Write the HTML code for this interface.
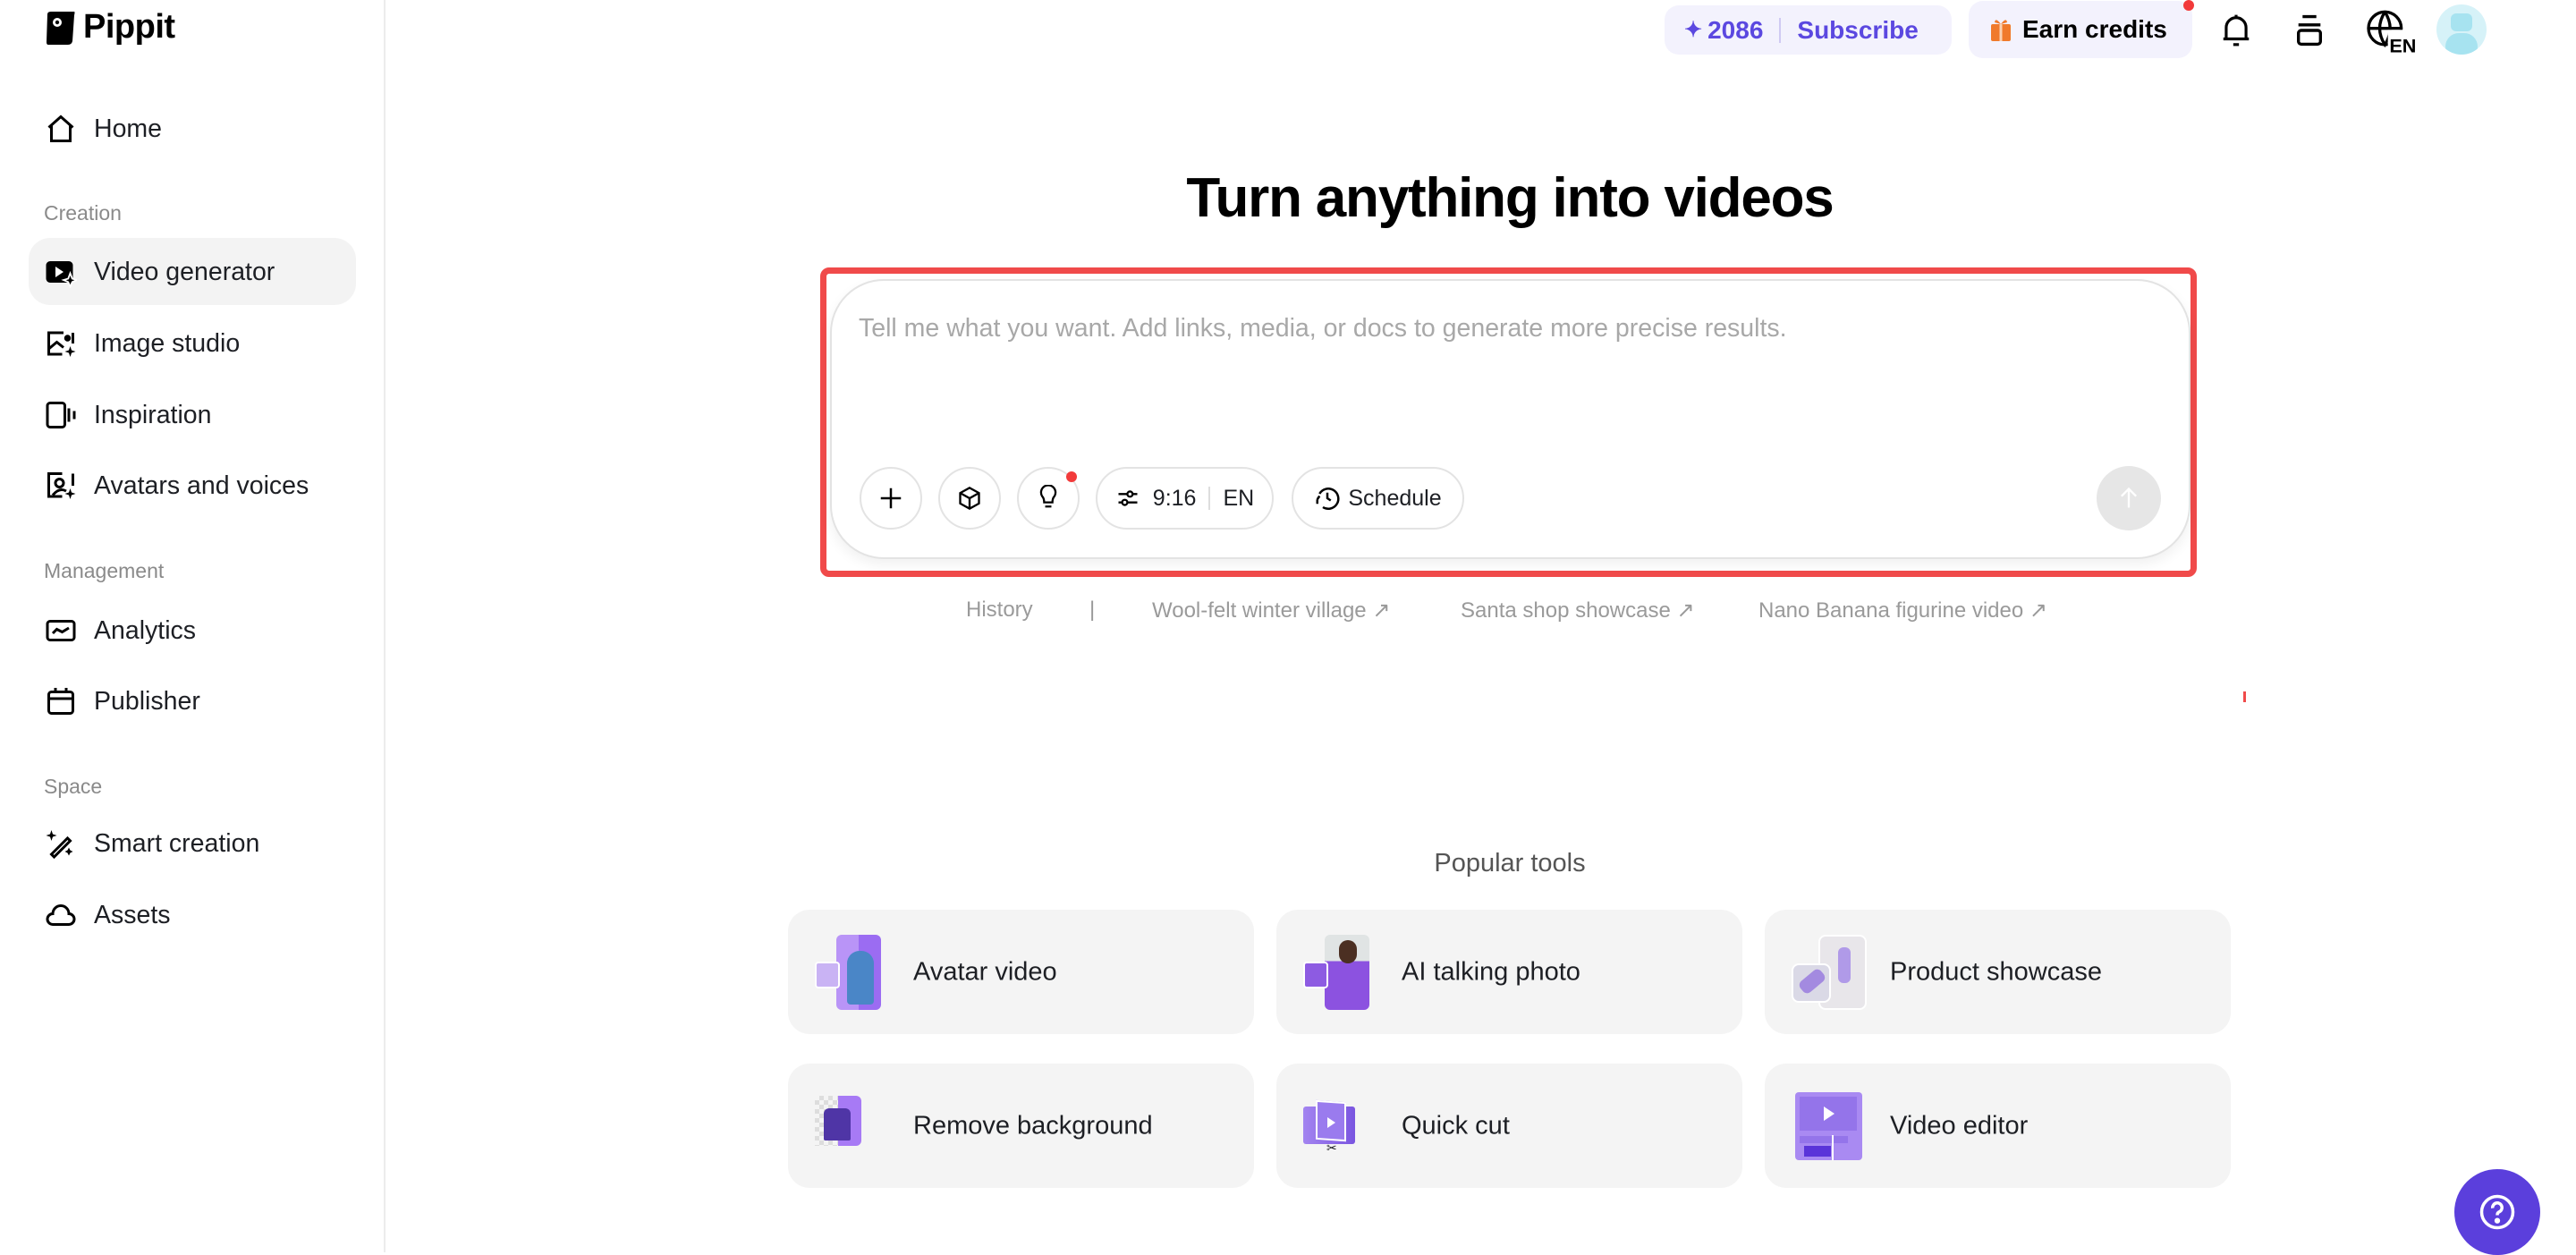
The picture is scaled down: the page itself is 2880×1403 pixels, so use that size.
<!DOCTYPE html>
<html><head><meta charset="utf-8"><style>
*{margin:0;padding:0;box-sizing:border-box}
body{width:2880px;height:1400px;background:#fff;font-family:"Liberation Sans",sans-serif;color:#1d1f24;position:relative;overflow:hidden}
.a{position:absolute}
.side{left:0;top:0;width:431px;height:1400px;border-right:2px solid #ececec}
.nav{position:absolute;left:50px;height:40px;display:flex;align-items:center;font-size:28.5px;color:#1d1f24}
.nav svg{width:36px;height:36px;margin-right:19px}
.lab{position:absolute;left:49px;font-size:23px;color:#8a8a8a}
.circ{position:absolute;top:522px;width:70px;height:70px;border:2px solid #e3e3e3;border-radius:35px;display:flex;align-items:center;justify-content:center;background:#fff}
.pill{position:absolute;top:522px;height:70px;border:2px solid #e3e3e3;border-radius:35px;display:flex;align-items:center;justify-content:center;font-size:25px;background:#fff}
.sug{position:absolute;top:668px;font-size:24px;color:#9a9a9a}
.card{position:absolute;width:521px;height:139px;background:#f4f4f4;border-radius:24px}
.card .t{position:absolute;left:140px;top:50%;transform:translateY(-50%);font-size:29px;color:#1d1f24}
.card .ic{position:absolute;left:30px;top:28px;width:80px;height:84px}
</style></head><body>
<div class="a side"></div>
<svg class="a" style="left:51px;top:12px" width="34" height="40" viewBox="0 0 34 40"><path d="M2 4 Q2 1 6 1 L32 1 Q33 1 32 5 L30 34 Q29 38 25 38 L3 38 Q1 38 1 35Z" fill="#000"/><circle cx="13" cy="13" r="5" fill="#fff"/><circle cx="13" cy="13" r="2.2" fill="#000"/></svg>
<div class="a" style="left:93px;top:9px;font-size:38px;font-weight:bold;letter-spacing:-0.5px;color:#000">Pippit</div>

<div class="a" style="left:32px;top:266px;width:366px;height:75px;background:#f3f3f3;border-radius:24px"></div>
<div class="nav" style="top:124px"><svg viewBox="0 0 24 24" fill="none" stroke="#000" stroke-width="2"><path d="M3 11 L12 3 L21 11 M5 9 V21 H19 V9"/></svg>Home</div>
<div class="lab" style="top:225px">Creation</div>
<div class="nav" style="top:284px"><svg viewBox="0 0 24 24"><rect x="1" y="4" width="20" height="16" rx="3" fill="#000"/><path d="M8 8 L14 12 L8 16Z" fill="#fff"/><path d="M19 13 L20.5 17 L24 18 L20.5 19.5 L19 23 L17.5 19.5 L14 18 L17.5 17Z" fill="#000" stroke="#fff" stroke-width="1.2"/></svg>Video generator</div>
<div class="nav" style="top:364px"><svg viewBox="0 0 24 24" fill="none" stroke="#000" stroke-width="2"><path d="M14 4 H3 V20 H13 M21 4 V12"/><path d="M3 16 L9 11 L14 15"/><circle cx="17" cy="8" r="1.5" fill="#000"/><path d="M19 14 L20 17 L23 18 L20 19 L19 22 L18 19 L15 18 L18 17Z" fill="#000" stroke="none"/></svg>Image studio</div>
<div class="nav" style="top:444px"><svg viewBox="0 0 24 24" fill="none" stroke="#000" stroke-width="2"><rect x="2" y="3" width="13" height="18" rx="2"/><path d="M18 7 V17 M22 9 V15"/></svg>Inspiration</div>
<div class="nav" style="top:523px"><svg viewBox="0 0 24 24" fill="none" stroke="#000" stroke-width="2"><path d="M13 3 H3 V20 H13 M21 3 V12"/><circle cx="11" cy="10" r="3"/><path d="M6 19 Q11 13 16 16"/><path d="M19 14 L20 17 L23 18 L20 19 L19 22 L18 19 L15 18 L18 17Z" fill="#000" stroke="none"/></svg>Avatars and voices</div>
<div class="lab" style="top:625px">Management</div>
<div class="nav" style="top:685px"><svg viewBox="0 0 24 24" fill="none" stroke="#000" stroke-width="2"><rect x="2" y="5" width="20" height="14" rx="2"/><path d="M6 14 L9 11 L13 13 L18 10"/></svg>Analytics</div>
<div class="nav" style="top:764px"><svg viewBox="0 0 24 24" fill="none" stroke="#000" stroke-width="2"><rect x="3" y="5" width="18" height="16" rx="2"/><path d="M3 10 H21 M8 2 V6 M16 2 V6"/></svg>Publisher</div>
<div class="lab" style="top:866px">Space</div>
<div class="nav" style="top:923px"><svg viewBox="0 0 24 24" fill="none" stroke="#000" stroke-width="2"><path d="M5 20 L17 8 L19 10 L7 22Z"/><path d="M5 2 L6 5 L9 6 L6 7 L5 10 L4 7 L1 6 L4 5Z M18 15 L19 17 L21 18 L19 19 L18 21 L17 19 L15 18 L17 17Z" fill="#000" stroke="none"/></svg>Smart creation</div>
<div class="nav" style="top:1003px"><svg viewBox="0 0 24 24" fill="none" stroke="#000" stroke-width="2"><path d="M6 19 H18 A4 4 0 0 0 18 11 A6 6 0 0 0 6 11 A4 4 0 0 0 6 19Z"/></svg>Assets</div>

<div class="a" style="left:1861px;top:6px;width:321px;height:55px;background:#f3f2fd;border-radius:16px;display:flex;align-items:center;padding-left:22px;font-size:28px;font-weight:bold;color:#5b48e0">
<span style="font-size:24px;margin-right:6px">✦</span>2086<span style="width:2px;height:28px;background:#cfcaf3;margin:0 18px"></span>Subscribe</div>
<div class="a" style="left:2201px;top:1px;width:250px;height:64px;background:#f3f2fd;border-radius:16px;display:flex;align-items:center;padding-left:24px;font-size:28px;font-weight:bold;color:#000">
<svg width="24" height="28" viewBox="0 0 24 28" style="margin-right:12px"><rect x="1" y="8" width="22" height="19" rx="2" fill="#f07a2b"/><rect x="10.5" y="8" width="3" height="19" fill="#fbd2b2"/><path d="M12 8 Q6 0 5 6Z M12 8 Q18 0 19 6Z" fill="#f07a2b"/></svg>Earn credits</div>
<div class="a" style="left:2441px;top:0;width:12px;height:12px;border-radius:6px;background:#f23a3a"></div>
<svg class="a" style="left:2481px;top:13px" width="38" height="42" viewBox="0 0 24 26" fill="none" stroke="#000" stroke-width="2"><path d="M5 19 V11 A7 7 0 0 1 19 11 V19 M3 19 H21 M12 2 V4"/><path d="M10 23 H14"/></svg>
<svg class="a" style="left:2563px;top:14px" width="38" height="40" viewBox="0 0 24 26" fill="none" stroke="#000" stroke-width="2.2"><path d="M7 3 H17 M4 9 H20"/><rect x="4" y="13" width="16" height="10" rx="2"/></svg>
<svg class="a" style="left:2644px;top:10px" width="58" height="50" viewBox="0 0 34 30" fill="none" stroke="#000" stroke-width="2"><circle cx="13" cy="13" r="11"/><path d="M2 13 H24 M13 2 Q6 13 13 24 Q20 13 13 2"/><rect x="15" y="14" width="19" height="16" fill="#fff" stroke="none"/><text x="16" y="29" font-family="Liberation Sans" font-weight="bold" font-size="13" fill="#000" stroke="none">EN</text></svg>
<div class="a" style="left:2724px;top:5px;width:56px;height:56px;border-radius:28px;background:#d6f2f8;overflow:hidden"><div class="a" style="left:16px;top:10px;width:24px;height:20px;background:#a7e3f0;border-radius:6px"></div><div class="a" style="left:10px;top:32px;width:36px;height:30px;background:#a7e3f0;border-radius:18px"></div></div>

<div class="a" style="left:0;width:3376px;top:186px;text-align:center;font-size:62px;font-weight:bold;letter-spacing:-1.2px;color:#000">Turn anything into videos</div>

<div class="a" style="left:917px;top:299px;width:1539px;height:346px;border:7px solid #f04a4a;border-radius:10px"></div>
<div class="a" style="left:928px;top:312px;width:1521px;height:313px;border:2px solid #e3e3e3;border-radius:60px;box-shadow:0 6px 14px rgba(0,0,0,0.06);background:#fff"></div>
<div class="a" style="left:960px;top:351px;font-size:28.5px;color:#a8a8a8">Tell me what you want. Add links, media, or docs to generate more precise results.</div>
<div class="circ" style="left:961px"><svg width="30" height="30" viewBox="0 0 24 24" stroke="#000" stroke-width="2"><path d="M12 3 V21 M3 12 H21"/></svg></div>
<div class="circ" style="left:1049px"><svg width="28" height="28" viewBox="0 0 24 24" fill="none" stroke="#000" stroke-width="2"><path d="M12 2 L21 7 V17 L12 22 L3 17 V7Z M3 7 L12 12 L21 7 M12 12 V22"/></svg></div>
<div class="circ" style="left:1137px"><svg width="28" height="30" viewBox="0 0 24 26" fill="none" stroke="#000" stroke-width="2"><path d="M8 17 Q8 13 6 11 A7 7 0 1 1 18 11 Q16 13 16 17Z M9 21 H15"/></svg></div>
<div class="a" style="left:1192px;top:527px;width:12px;height:12px;border-radius:6px;background:#f23a3a"></div>
<div class="pill" style="left:1225px;width:199px"><svg width="28" height="28" viewBox="0 0 24 24" fill="none" stroke="#000" stroke-width="2"><path d="M3 8 H21 M3 16 H21"/><circle cx="14" cy="8" r="2.5" fill="#fff"/><circle cx="9" cy="16" r="2.5" fill="#fff"/></svg><span style="margin-left:14px">9:16</span><span style="width:2px;height:26px;background:#ddd;margin:0 14px"></span>EN</div>
<div class="pill" style="left:1444px;width:193px"><svg width="30" height="30" viewBox="0 0 24 24" fill="none" stroke="#000" stroke-width="2"><path d="M5 8 A9 9 0 1 1 8 20 M12 7 V12 L15 14 M3 13 V17 M5 10 L3 13"/></svg><span style="margin-left:8px">Schedule</span></div>
<div class="a" style="left:2344px;top:521px;width:72px;height:72px;border-radius:36px;background:#e6e6e6;display:flex;align-items:center;justify-content:center"><svg width="28" height="28" viewBox="0 0 24 24" fill="none" stroke="#fff" stroke-width="2"><path d="M12 21 V4 M5 10 L12 3 L19 10"/></svg></div>

<div class="sug" style="left:1080px">History</div>
<div class="sug" style="left:1218px">|</div>
<div class="sug" style="left:1288px">Wool-felt winter village ↗</div>
<div class="sug" style="left:1633px">Santa shop showcase ↗</div>
<div class="sug" style="left:1966px">Nano Banana figurine video ↗</div>
<div class="a" style="left:2508px;top:773px;width:3px;height:12px;background:#f04a4a"></div>

<div class="a" style="left:0;width:3376px;top:949px;text-align:center;font-size:29px;color:#555">Popular tools</div>

<div class="card" style="left:881px;top:1017px"><div class="ic"><div class="a" style="left:24px;top:0;width:50px;height:84px;border-radius:6px;background:linear-gradient(90deg,#b994f7 0 50%,#9b6cf2 50%)"></div><div class="a" style="left:36px;top:18px;width:30px;height:60px;border-radius:14px 14px 4px 4px;background:#4a86c7"></div><div class="a" style="left:0;top:30px;width:28px;height:30px;border-radius:4px;background:#c9b3f4;border:2px solid #fff"></div></div><div class="t">Avatar video</div></div>
<div class="card" style="left:1427px;top:1017px"><div class="ic"><div class="a" style="left:24px;top:0;width:50px;height:84px;border-radius:6px;background:linear-gradient(#e0e4e4 0 35%,#8c52e0 35%)"></div><div class="a" style="left:40px;top:6px;width:20px;height:26px;border-radius:10px;background:#4b2f22"></div><div class="a" style="left:0;top:30px;width:28px;height:30px;border-radius:4px;background:#8d5be2;border:2px solid #fff"></div></div><div class="t">AI talking photo</div></div>
<div class="card" style="left:1973px;top:1017px"><div class="ic"><div class="a" style="left:30px;top:0;width:54px;height:84px;border-radius:8px;background:#e8e6ea;border:2px solid #fff"></div><div class="a" style="left:52px;top:14px;width:14px;height:40px;border-radius:6px;background:#b09ae8"></div><div class="a" style="left:0;top:32px;width:44px;height:44px;border-radius:8px;background:#dad9e6;border:2px solid #fff"></div><div class="a" style="left:8px;top:44px;width:30px;height:16px;border-radius:6px;background:#a38ae0;transform:rotate(-40deg)"></div></div><div class="t">Product showcase</div></div>
<div class="card" style="left:881px;top:1189px"><div class="ic"><div class="a" style="left:0;top:8px;width:26px;height:56px;background:repeating-conic-gradient(#ddd 0 25%,#f4f4f4 0 50%) 0 0/10px 10px"></div><div class="a" style="left:26px;top:8px;width:26px;height:56px;border-radius:0 6px 6px 0;background:#a77af5"></div><div class="a" style="left:10px;top:22px;width:30px;height:36px;border-radius:6px 6px 2px 2px;background:#4f35a6"></div></div><div class="t">Remove background</div></div>
<div class="card" style="left:1427px;top:1189px"><div class="ic"><div class="a" style="left:0;top:20px;width:58px;height:42px;border-radius:3px;background:linear-gradient(90deg,#a384f0,#7a55e0)"></div><div class="a" style="left:14px;top:14px;width:34px;height:44px;border:2px solid #fff;background:#9a7bee;transform:skewY(4deg)"></div><div class="a" style="left:27px;top:32px;width:0;height:0;border-left:9px solid #fff;border-top:6px solid transparent;border-bottom:6px solid transparent"></div><div class="a" style="left:26px;top:58px;font-size:14px">✂</div></div><div class="t">Quick cut</div></div>
<div class="card" style="left:1973px;top:1189px"><div class="ic"><div class="a" style="left:4px;top:4px;width:75px;height:76px;border-radius:4px;background:#a98af2"></div><div class="a" style="left:9px;top:9px;width:64px;height:38px;background:#9474ea"></div><div class="a" style="left:36px;top:20px;width:0;height:0;border-left:12px solid #fff;border-top:8px solid transparent;border-bottom:8px solid transparent"></div><div class="a" style="left:9px;top:53px;width:54px;height:8px;background:#9474ea"></div><div class="a" style="left:14px;top:64px;width:30px;height:12px;background:#5a34d9"></div><div class="a" style="left:45px;top:52px;width:2px;height:28px;background:#fff"></div></div><div class="t">Video editor</div></div>

<div class="a" style="left:2744px;top:1307px;width:96px;height:96px;border-radius:48px;background:#5b3fdc;display:flex;align-items:center;justify-content:center"><svg width="42" height="42" viewBox="0 0 24 24" fill="none" stroke="#fff" stroke-width="2"><circle cx="12" cy="12" r="10"/><path d="M9 9.5 A3 3 0 1 1 13 12 Q12 12.5 12 14"/><circle cx="12" cy="17.5" r="0.8" fill="#fff"/></svg></div>
</body></html>
